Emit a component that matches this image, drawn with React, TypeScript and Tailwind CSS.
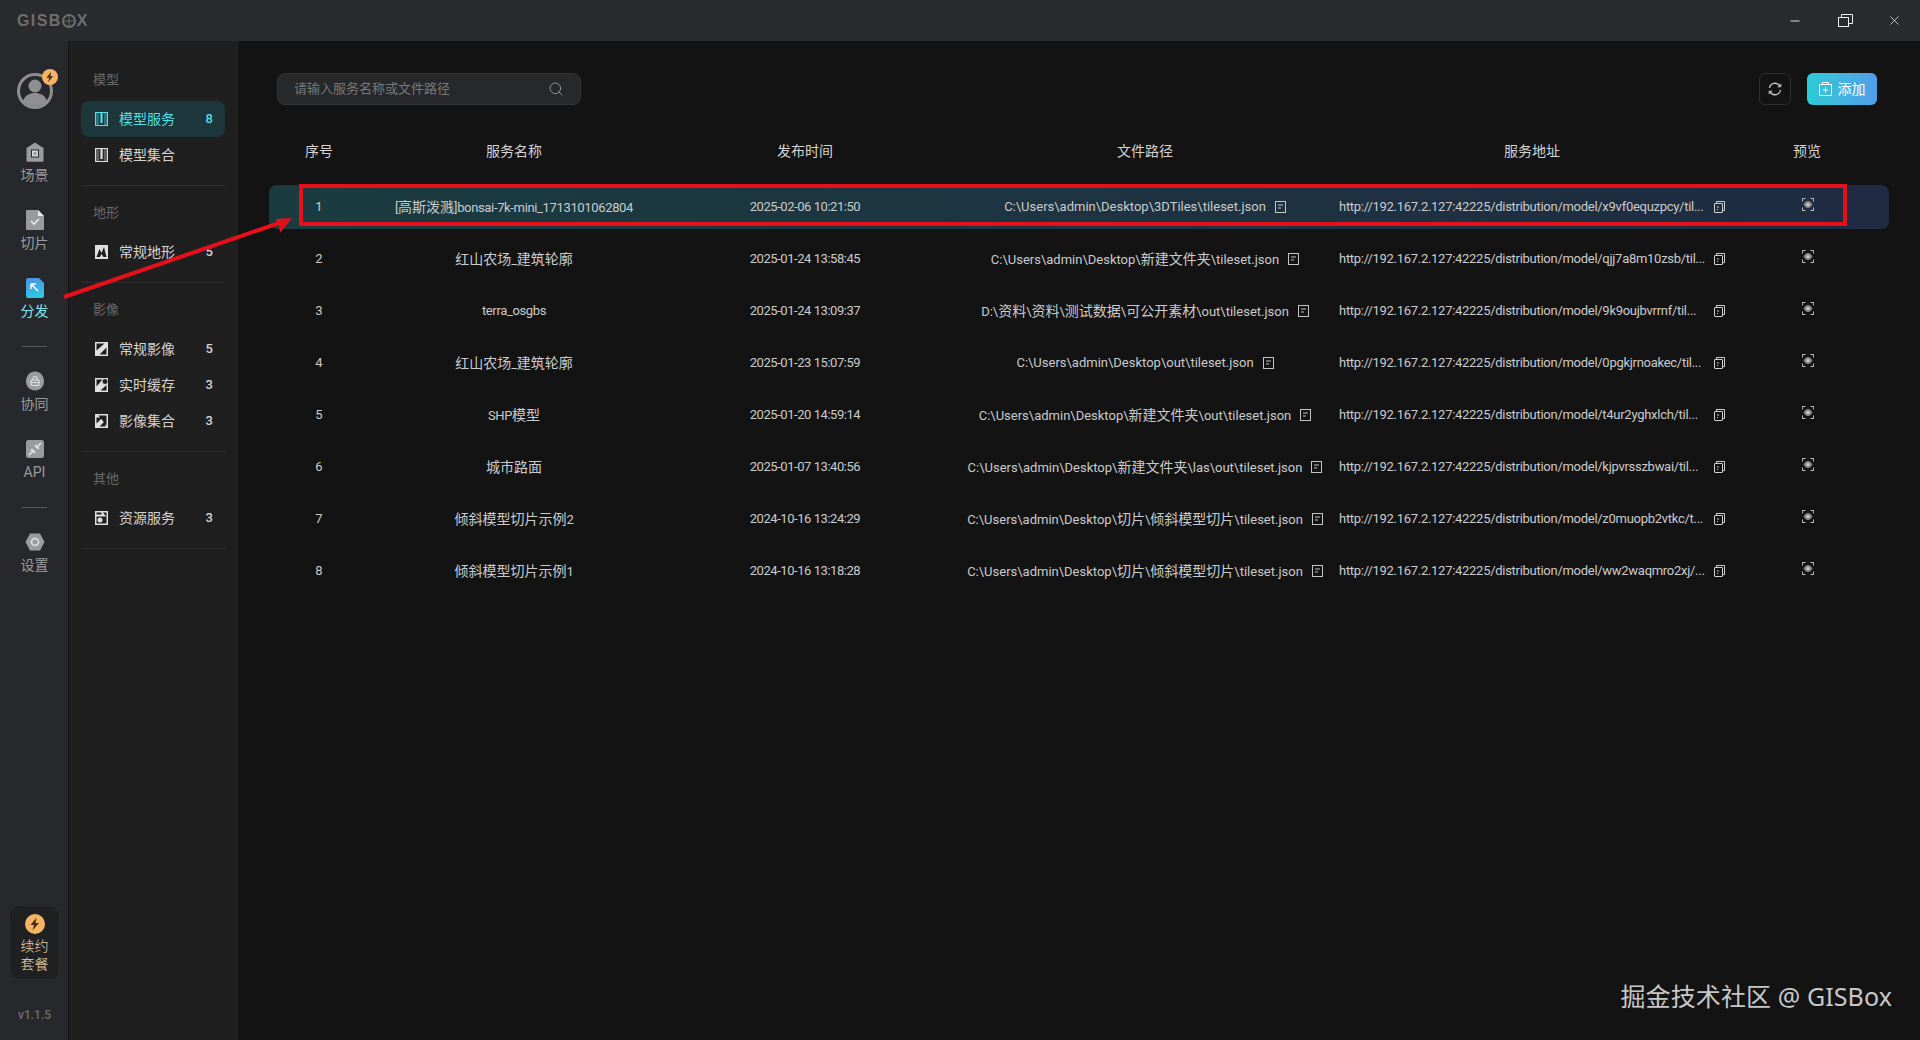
import { Minus, Search, X } from "lucide-react";

const rows = [
  { id: 1, name: "[高斯泼溅]bonsai-7k-mini_1713101062804", time: "2025-02-06 10:21:50", path: "C:\\Users\\admin\\Desktop\\3DTiles\\tileset.json", url: "http://192.167.2.127:42225/distribution/model/x9vf0equzpcy/til..." },
  { id: 2, name: "红山农场_建筑轮廓", time: "2025-01-24 13:58:45", path: "C:\\Users\\admin\\Desktop\\新建文件夹\\tileset.json", url: "http://192.167.2.127:42225/distribution/model/qjj7a8m10zsb/til..." },
  { id: 3, name: "terra_osgbs", time: "2025-01-24 13:09:37", path: "D:\\资料\\资料\\测试数据\\可公开素材\\out\\tileset.json", url: "http://192.167.2.127:42225/distribution/model/9k9oujbvrrnf/til..." },
  { id: 4, name: "红山农场_建筑轮廓", time: "2025-01-23 15:07:59", path: "C:\\Users\\admin\\Desktop\\out\\tileset.json", url: "http://192.167.2.127:42225/distribution/model/0pgkjrnoakec/til..." },
  { id: 5, name: "SHP模型", time: "2025-01-20 14:59:14", path: "C:\\Users\\admin\\Desktop\\新建文件夹\\out\\tileset.json", url: "http://192.167.2.127:42225/distribution/model/t4ur2yghxlch/til..." },
  { id: 6, name: "城市路面", time: "2025-01-07 13:40:56", path: "C:\\Users\\admin\\Desktop\\新建文件夹\\las\\out\\tileset.json", url: "http://192.167.2.127:42225/distribution/model/kjpvrsszbwai/til..." },
  { id: 7, name: "倾斜模型切片示例2", time: "2024-10-16 13:24:29", path: "C:\\Users\\admin\\Desktop\\切片\\倾斜模型切片\\tileset.json", url: "http://192.167.2.127:42225/distribution/model/z0muopb2vtkc/t..." },
  { id: 8, name: "倾斜模型切片示例1", time: "2024-10-16 13:18:28", path: "C:\\Users\\admin\\Desktop\\切片\\倾斜模型切片\\tileset.json", url: "http://192.167.2.127:42225/distribution/model/ww2waqmro2xj/..." },
];

const groups = [
  { label: "模型", items: [{ name: "模型服务", count: 8, active: true, icon: "book" }, { name: "模型集合", icon: "book" }] },
  { label: "地形", items: [{ name: "常规地形", count: 5, icon: "terrain" }] },
  { label: "影像", items: [{ name: "常规影像", count: 5, icon: "image" }, { name: "实时缓存", count: 3, icon: "cache" }, { name: "影像集合", count: 3, icon: "stack" }] },
  { label: "其他", items: [{ name: "资源服务", count: 3, icon: "res" }] },
];

// CJK runs sit at 14px next to the narrower latin text
function Mixed({ text, latin }: { text: string; latin: string }) {
  const parts = text.split(/([\u4e00-\u9fff]+)/);
  return (
    <span className={latin}>
      {parts.map((part, i) =>
        i % 2 === 1 ? (
          <span key={i} className="text-sm tracking-normal">
            {part}
          </span>
        ) : (
          part
        ),
      )}
    </span>
  );
}

function SideIcon({ kind, color }: { kind: string; color: string }) {
  const dark = "#1f1f20";
  if (kind === "book")
    return (
      <svg width="13" height="14" viewBox="0 0 13 14" className="shrink-0">
        <rect x="0.500" y="0.500" width="12" height="13" fill={color} fillOpacity="0.35" stroke={color} />
        <path d="M4 1h1.500v10H7.500V1H9v12H4z" fill={dark} fillOpacity="0.75" />
        <path d="M5.500 1h2v10h-2z" fill={color} />
      </svg>
    );
  if (kind === "terrain")
    return (
      <svg width="13" height="14" viewBox="0 0 13 14" className="shrink-0">
        <rect width="13" height="14" fill={color} />
        <path d="M1.500 12 4.500 4 6.500 8 9 2l2.500 10H8.500L6.500 9 5 12z" fill={dark} />
      </svg>
    );
  return (
    <svg width="13" height="14" viewBox="0 0 13 14" className="shrink-0">
      <rect width="13" height="14" fill={color} />
      {kind === "image" && <path d="M1.500 1.500h8L1.500 8.500zM11.500 5.500v7h-7z" fill={dark} />}
      {kind === "cache" && (
        <>
          <path d="M1.500 1.500h6L1.500 8.500zM11.500 7v5.500h-6z" fill={dark} />
          <circle cx="10" cy="3.500" r="3" fill={dark} stroke={color} />
        </>
      )}
      {kind === "stack" && <path d="M1.500 3.500h6L1.500 9.500zM10.500 6.500v6h-6zM3.500 1.500h8v10" fill={dark} />}
      {kind === "res" && (
        <>
          <path d="M1.500 1.500h5v2h-5zM1.500 5.500h10v7h-10z" fill={dark} />
          <circle cx="5" cy="9" r="2.500" fill={color} />
          <path d="M8 1.500h3.500V6z" fill={dark} />
        </>
      )}
    </svg>
  );
}

function RailIcon({ kind }: { kind: string }) {
  const g = "#9a9b9d";
  const d = "#27282b";
  if (kind === "scene")
    return (
      <svg width="18" height="20" viewBox="0 0 18 20">
        <path d="M0.500 6 9 0.500 17.500 6v13a.8.8 0 0 1-.8.8H1.300a.8.8 0 0 1-.8-.8z" fill={g} />
        <rect x="5.500" y="8" width="7" height="7" fill="#d8d8d8" stroke={d} strokeWidth="1" />
        <rect x="7.500" y="10" width="3" height="3" fill={g} />
      </svg>
    );
  if (kind === "slice")
    return (
      <svg width="18" height="20" viewBox="0 0 18 20">
        <path d="M1 0h11l6 6v13a1 1 0 0 1-1 1H1a1 1 0 0 1-1-1V1a1 1 0 0 1 1-1z" fill={g} />
        <path d="M12 0v6h6z" fill="#e8e8e8" />
        <path d="m5 11 3 3 5-5" fill="none" stroke="#e8e8e8" strokeWidth="1.600" />
      </svg>
    );
  if (kind === "dist")
    return (
      <svg width="18" height="20" viewBox="0 0 18 20">
        <defs>
          <linearGradient id="distFill" x1="0" y1="0" x2="0.300" y2="1">
            <stop offset="0" stopColor="#4d8fe6" />
            <stop offset="1" stopColor="#2ec8e0" />
          </linearGradient>
        </defs>
        <path d="M2 0h11l5 5v13a2 2 0 0 1-2 2H2a2 2 0 0 1-2-2V2a2 2 0 0 1 2-2z" fill="url(#distFill)" />
        <path d="M5 6h5M5 6v5M5 6l7 7" fill="none" stroke="#fff" strokeWidth="1.500" />
      </svg>
    );
  if (kind === "team")
    return (
      <svg width="18" height="20" viewBox="0 0 18 20">
        <path d="M9 0.500c5 0 9 4 9 10 0 5-4 9-9 9s-9-4-9-9c0-6 4-10 9-10z" fill={g} />
        <rect x="5" y="9" width="8" height="5.500" rx="1" fill="none" stroke="#e0e0e0" strokeWidth="1.200" />
        <path d="M7 9V7.500a2 2 0 0 1 4 0V9M5 11.500h8" fill="none" stroke="#e0e0e0" strokeWidth="1.200" />
      </svg>
    );
  if (kind === "api")
    return (
      <svg width="18" height="18" viewBox="0 0 18 18">
        <rect width="18" height="18" rx="2.500" fill={g} />
        <path d="m3 15 3-3M15 3l-3 3" stroke="#e6e6e6" strokeWidth="1.500" />
        <path d="m4.500 10 3.500 3.500 1.500-1.500-3.500-3.500zM8.500 6l3.500 3.500 1.500-1.500L10 4.500z" fill="#e6e6e6" />
      </svg>
    );
  return (
    <svg width="20" height="18" viewBox="0 0 20 18">
      <path d="M5 0.500h10L19.500 9 15 17.500H5L0.500 9z" fill={g} />
      <circle cx="10" cy="9" r="3.500" fill="none" stroke="#e0e0e0" strokeWidth="1.700" />
    </svg>
  );
}

function Bolt({ size }: { size: number }) {
  return (
    <svg width={size} height={size} viewBox="0 0 20 20">
      <circle cx="10" cy="10" r="10" fill="#f6b566" />
      <path d="M11.500 3.500 5.500 11h3.500l-1.500 5.500 6.500-7.500h-3.500z" fill="#4a2d10" />
    </svg>
  );
}

function RailItem({ kind, label, active }: { kind: string; label: string; active?: boolean }) {
  return (
    <div className="flex h-[68px] flex-col items-center justify-center gap-[3px]">
      <div className="flex h-5 items-center">
        <RailIcon kind={kind} />
      </div>
      <span className={`text-sm leading-5 ${active ? "text-[#7fe6ec]" : "text-[#9a9b9d]"}`}>{label}</span>
    </div>
  );
}

function CopyIcon() {
  return (
    <svg width="11" height="12" viewBox="0 0 11 12" className="shrink-0">
      <rect x="0.500" y="2.500" width="8" height="9" rx="0.500" fill="none" stroke="#cfcfcf" />
      <path d="M2.500 2.500V.5h8v9h-2M3 6h2M3 8.500h1" fill="none" stroke="#cfcfcf" />
    </svg>
  );
}

function PathIcon() {
  return (
    <svg width="11" height="12" viewBox="0 0 11 12" className="shrink-0">
      <rect x="0.500" y="0.500" width="10" height="11" fill="none" stroke="#c4c4c4" />
      <path d="M3 4h5M3 7h3" stroke="#c4c4c4" />
    </svg>
  );
}

function PreviewIcon() {
  return (
    <svg width="12" height="13" viewBox="0 0 12 13" className="mb-[6px]">
      <path d="M.5 3.500v-3h3M8.500.5h3v3M.5 9.500v3h3M8.500 12.500h3v-3" fill="none" stroke="#bdbdbd" />
      <path d="M1.500 6.500C3 4 4.500 3 6 3s3 1 4.500 3.500C9 9 7.500 10 6 10S3 9 1.500 6.500z" fill="#8c8c8c" />
      <circle cx="6" cy="6.500" r="1.500" fill="#d0d0d0" />
    </svg>
  );
}

export default function App() {
  return (
    <div className="relative flex h-[1040px] w-[1920px] flex-col overflow-hidden bg-[#131314] font-['Roboto','Noto_Sans_CJK_SC',sans-serif] text-[#cbcbcb]">
      {/* Title bar */}
      <div className="flex h-[41px] shrink-0 items-center justify-between bg-[#2a2b2d] pl-[17px]">
        <div className="flex items-center font-['Liberation_Sans',sans-serif] text-base font-bold tracking-[1.4px] text-[#6d6e70]">
          GISB
          <svg width="14" height="14" viewBox="0 0 14 14" className="mr-[1px]">
            <circle cx="7" cy="7" r="6" fill="none" stroke="#6d6e70" strokeWidth="2" />
            <path d="M1 7h12M7 1v12" stroke="#6d6e70" />
          </svg>
          X
        </div>
        <div className="flex items-center">
          <div className="flex w-[50px] justify-center">
            <Minus size={14} strokeWidth={1.5} color="#f0f0f0" />
          </div>
          <div className="flex w-[50px] justify-center">
            <svg width="15" height="13" viewBox="0 0 15 13">
              <rect x="0.500" y="3.500" width="10" height="9" fill="none" stroke="#f0f0f0" />
              <path d="M3.500 3.500V.5h11v9h-4" fill="none" stroke="#f0f0f0" />
            </svg>
          </div>
          <div className="flex w-[50px] justify-center pr-[1px]">
            <X size={15} strokeWidth={1.2} color="#f0f0f0" />
          </div>
        </div>
      </div>

      <div className="flex min-h-0 flex-1">
        {/* Left rail */}
        <div className="flex w-[69px] shrink-0 flex-col border-r border-[#131314] bg-[#27282b] pl-[1px]">
          <div className="flex h-[88px] items-end justify-center pb-[20px]">
            <div className="relative h-[36px] w-[36px]">
              <svg width="36" height="36" viewBox="0 0 36 36">
                <circle cx="18" cy="18" r="16.500" fill="none" stroke="#8e8f91" strokeWidth="3" />
                <circle cx="18" cy="13" r="6.500" fill="#8e8f91" />
                <path d="M6 28c2-6 7-8 12-8s10 2 12 8c-3 3-7 5-12 5s-9-2-12-5z" fill="#8e8f91" />
              </svg>
              <div className="absolute -top-[4px] -right-[5px]">
                <Bolt size={16} />
              </div>
            </div>
          </div>
          <RailItem kind="scene" label="场景" />
          <RailItem kind="slice" label="切片" />
          <RailItem kind="dist" label="分发" active />
          <div className="mx-auto mt-[13px] mb-[11px] h-px w-[25px] bg-[#57585a]" />
          <RailItem kind="team" label="协同" />
          <RailItem kind="api" label="API" />
          <div className="mx-auto mt-[13px] mb-[11px] h-px w-[25px] bg-[#57585a]" />
          <RailItem kind="gear" label="设置" />

          <div className="mx-auto mt-auto flex h-[75px] w-[51px] flex-col items-center rounded-[10px] border border-[#2c2d30] bg-[#1f2022] pt-[8px]">
            <Bolt size={20} />
            <span className="mt-[3px] text-center text-[14px] leading-[18px] font-light text-[#f0d2a6]">
              续约
              <br />
              套餐
            </span>
          </div>
          <div className="mt-[27px] mb-[17px] text-center text-[12px] leading-4 font-medium text-[#6d6e70]">v1.1.5</div>
        </div>

        {/* Service menu */}
        <div className="w-[169px] shrink-0 bg-[#1f1f20] pt-[29px] pr-[13px] pl-[12px]">
          {groups.map((group, gi) => (
            <div key={group.label} className={gi > 0 ? "mt-[17px]" : ""}>
              <div className="mb-[11px] pl-[12px] text-[13px] leading-5 text-[#68696a]">{group.label}</div>
              <div className="flex flex-col">
                {group.items.map((item) => (
                  <div
                    key={item.name}
                    className={`flex h-[36px] items-center rounded-lg pr-[12px] pl-[14px] text-sm ${
                      item.active ? "bg-[#1c363c] text-[#52dfe6]" : "text-[#d4d4d4]"
                    }`}
                  >
                    <SideIcon kind={item.icon} color={item.active ? "#52dfe6" : "#e0e0e0"} />
                    <span className="ml-[11px] flex-1">{item.name}</span>
                    <span className="text-[13px] font-medium">{item.count}</span>
                  </div>
                ))}
              </div>
              <div className="mt-[12px] h-px bg-[#2d2e2f]" />
            </div>
          ))}
        </div>

        {/* Main */}
        <div className="min-w-0 flex-1 pt-[32px] pr-[31px] pl-[31px]">
          <div className="flex items-center justify-between pr-[12px] pl-[8px]">
            <div className="flex h-[32px] w-[304px] items-center justify-between rounded-lg border border-[#333436] bg-[#27282a] pr-[16px] pl-[16px] text-[13px] text-[#77787a]">
              请输入服务名称或文件路径
              <Search size={16} strokeWidth={1.2} color="#a8a8a8" />
            </div>
            <div className="flex items-center gap-[16px]">
              <div className="ml-[2px] flex h-[32px] w-[32px] items-center justify-center rounded-md border border-[#2e2f31]">
                <svg width="14" height="14" viewBox="0 0 14 14" fill="none" stroke="#c8c8c8" strokeWidth="1.300">
                  <path d="M1.500 6a5.600 5.600 0 0 1 10-2.500l1 1.200M12.500 8a5.600 5.600 0 0 1-10 2.500l-1-1.200" />
                  <path d="M12.800 1.800v3h-3M1.200 12.200v-3h3" strokeWidth="1" />
                </svg>
              </div>
              <div className="flex h-[32px] w-[70px] items-center justify-center gap-[6px] rounded-md bg-gradient-to-r from-[#2bcbd6] to-[#509de9] text-sm text-white">
                <svg width="13" height="14" viewBox="0 0 13 14" fill="none" stroke="#fff">
                  <path d="M.5 2.500h12v11H.5zM3.500 2.500V.5h6v2M6.500 5.500v5M4 8h5" />
                </svg>
                添加
              </div>
            </div>
          </div>

          <div className="mt-[31px] grid h-[30px] grid-cols-[100px_290px_292px_388px_386px_164px] items-center text-center text-sm text-[#d4d4d4]">
            <span>序号</span>
            <span>服务名称</span>
            <span>发布时间</span>
            <span>文件路径</span>
            <span>服务地址</span>
            <span>预览</span>
          </div>

          <div className="mt-[19px] flex flex-col gap-[8px]">
            {rows.map((row) => (
              <div
                key={row.id}
                className={`grid h-[44px] grid-cols-[100px_290px_292px_388px_386px_164px] items-center rounded-lg text-center text-[13px] ${
                  row.id === 1 ? "bg-gradient-to-r from-[#1a3c40] to-[#1f2b42]" : ""
                }`}
              >
                <span>{row.id}</span>
                <span className="truncate">
                  <Mixed text={row.name} latin="tracking-[-0.35px]" />
                </span>
                <span className="tracking-[-0.45px]">{row.time}</span>
                <span className="flex items-center justify-center gap-[9px]">
                  <Mixed text={row.path} latin="tracking-normal" />
                  <PathIcon />
                </span>
                <span className="flex items-center justify-between text-left">
                  <span className="w-[368px] truncate tracking-[-0.28px]">{row.url}</span>
                  <CopyIcon />
                </span>
                <span className="flex justify-center pl-[2px]">
                  <PreviewIcon />
                </span>
              </div>
            ))}
          </div>
        </div>
      </div>

      {/* Annotation over the screenshot */}
      <div className="pointer-events-none absolute top-[184px] left-[299px] h-[42px] w-[1548px] border-4 border-[#e5101a]" />
      <svg className="pointer-events-none absolute top-0 left-0" width="320" height="320" viewBox="0 0 320 320">
        <path d="M64 297 282 222" stroke="#e5101a" strokeWidth="4" />
        <path d="M292 218 276 219 279 226 280 233z" fill="#e5101a" />
      </svg>

      <div className="absolute right-[28px] bottom-[27px] font-['Noto_Sans','Noto_Sans_CJK_SC',sans-serif] text-[25px] leading-[34px] tracking-[0.1px] text-[#c8c8c8]">
        掘金技术社区 @ GISBox
      </div>
    </div>
  );
}
